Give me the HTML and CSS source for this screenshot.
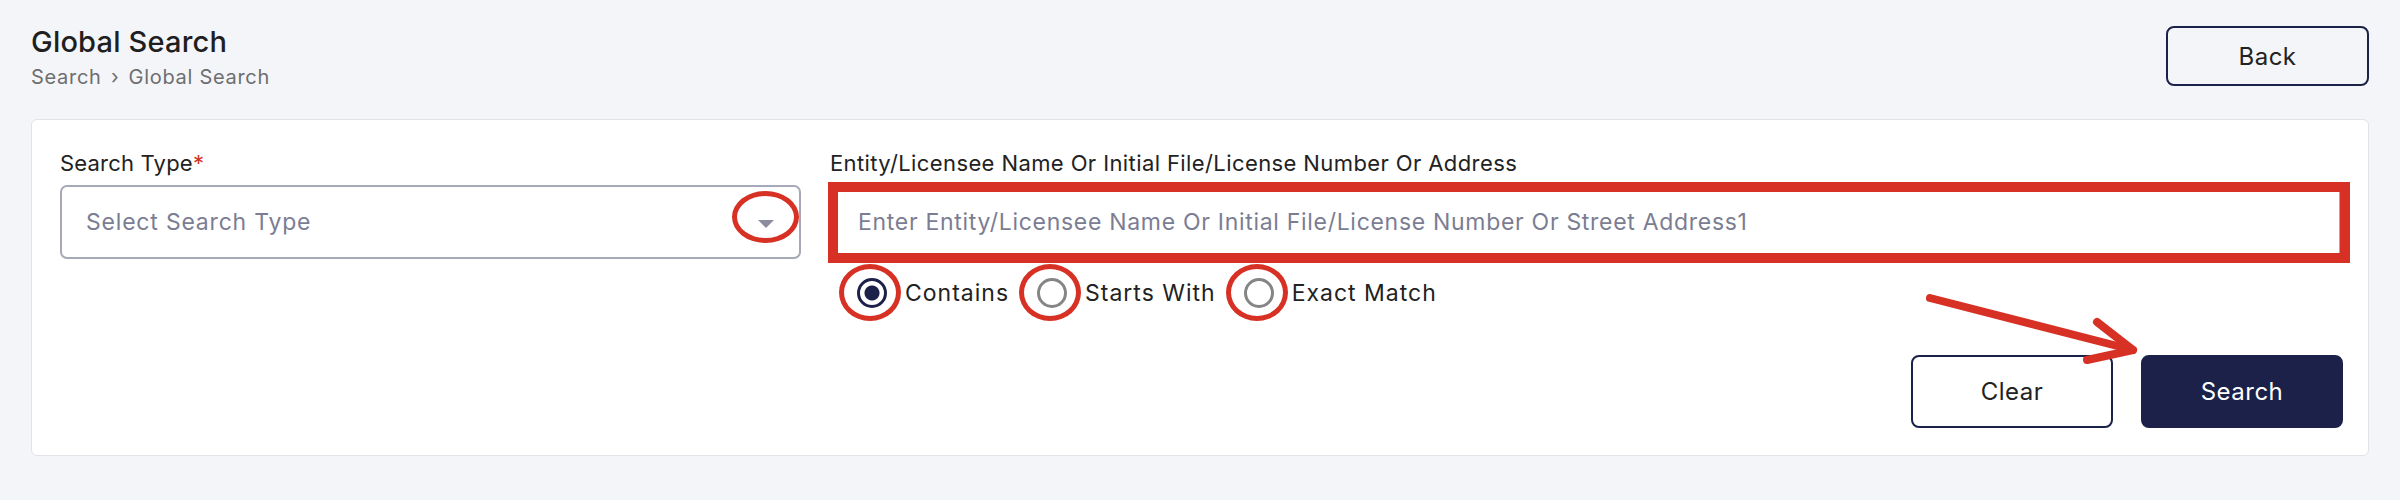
FILE: index.html
```html
<!DOCTYPE html>
<html lang="en-US">
  <head>
    <title>Global Search</title>
    <meta charset="utf-8" />
    <link rel="stylesheet" href="styles.css">
  </head>
  <body>
    <div class="page">
      <header class="top">
        <div class="heading">
          <h1 class="title">Global Search</h1>
          <nav class="crumbs">Search <span class="sep">&#8250;</span> Global Search</nav>
        </div>
        <button class="btn btnOutline back">Back</button>
      </header>

      <section class="card">
        <div class="fields">
          <div class="field">
            <label class="label">Search Type<span class="req">*</span></label>
            <div class="select">
              <span class="selectText">Select Search Type</span>
              <span class="caret"><span class="ring ringCaret"></span></span>
            </div>
          </div>

          <div class="field">
            <label class="label">Entity/Licensee Name Or Initial File/License Number Or Address</label>
            <div class="inputWrap">
              <input class="input" type="text" placeholder="Enter Entity/Licensee Name Or Initial File/License Number Or Street Address1" />
              <span class="box"></span>
            </div>
            <div class="radios">
              <label class="radio">
                <span class="radioMark"><input type="radio" name="match" checked /><span class="ring"></span></span>
                Contains
              </label>
              <label class="radio">
                <span class="radioMark"><input type="radio" name="match" /><span class="ring"></span></span>
                Starts With
              </label>
              <label class="radio">
                <span class="radioMark"><input type="radio" name="match" /><span class="ring"></span></span>
                Exact Match
              </label>
            </div>
          </div>
        </div>

        <div class="actions">
          <button class="btn btnOutline">Clear</button>
          <button class="btn btnPrimary">Search</button>
        </div>

        <!-- pointer to the search button -->
        <svg class="arrow" width="260" height="100" viewBox="0 0 260 100">
          <g fill="none" stroke="#d63124" stroke-width="8" stroke-linecap="round" stroke-linejoin="round">
            <path d="M30 18 L233 70" />
            <path d="M197 42 L233 70 L187 80" />
          </g>
        </svg>
      </section>
    </div>
  </body>
</html>
```

FILE: styles.css
```css
* {
  margin: 0;
  padding: 0;
  box-sizing: border-box;
}

body {
  background-color: #f4f5f9;
  font-family: "Inter", "Noto Sans", sans-serif;
  color: #222222;
}

.page {
  padding: 0 31px;
}

.top {
  display: flex;
  justify-content: space-between;
  align-items: flex-start;
  padding-top: 24px;
  margin-bottom: 30px;
}

.title {
  font-size: 29px;
  line-height: 35px;
  font-weight: 500;
  letter-spacing: 0.2px;
  color: #1f1f1f;
}

.crumbs {
  margin-top: 6px;
  font-size: 20px;
  line-height: 24px;
  letter-spacing: 0.7px;
  color: #6e6e6e;
}

.sep {
  margin: 0 3px;
}

.btn {
  font-family: inherit;
  font-size: 24px;
  letter-spacing: 0.5px;
  border-radius: 8px;
  cursor: pointer;
}

.btnOutline {
  background-color: transparent;
  border: 2px solid #1b2149;
  color: #222222;
}

.btnPrimary {
  background-color: #1b2149;
  border: 2px solid #1b2149;
  color: #ffffff;
}

.back {
  margin-top: 2px;
  width: 203px;
  height: 60px;
}

.card {
  position: relative;
  background-color: #ffffff;
  border: 1px solid #e2e3e8;
  border-radius: 6px;
  padding: 30px 27px 27px 28px;
}

.fields {
  display: grid;
  grid-template-columns: 741px 1fr;
  gap: 29px;
}

.label {
  display: block;
  font-size: 22px;
  line-height: 26px;
  letter-spacing: 0.4px;
  margin-bottom: 9px;
}

.field:first-child .label {
  letter-spacing: 0.2px;
}

.req {
  color: #d63124;
}

.select {
  position: relative;
  height: 74px;
  border: 2px solid #a7a9b9;
  border-radius: 7px;
  display: flex;
  align-items: center;
  padding-left: 24px;
}

.selectText {
  font-size: 23px;
  letter-spacing: 0.8px;
  color: #7b7d92;
}

.caret {
  position: absolute;
  right: 25px;
  top: 33px;
  width: 0;
  height: 0;
  border-left: 8px solid transparent;
  border-right: 8px solid transparent;
  border-top: 8px solid #8b8ca0;
}

.ring {
  position: absolute;
  left: -18px;
  top: -14px;
  width: 62px;
  height: 57px;
  border: 5px solid #d63124;
  border-radius: 50%;
  pointer-events: none;
}

.ringCaret {
  left: -34px;
  top: -37px;
  width: 67px;
  height: 52px;
}

.inputWrap {
  position: relative;
}

.input {
  display: block;
  width: 100%;
  height: 74px;
  border: 2px solid #a7a9b9;
  border-radius: 7px;
  padding-left: 26px;
  font-family: inherit;
  font-size: 23px;
  letter-spacing: 0.7px;
  color: #222222;
  outline: none;
}

.input::placeholder {
  color: #7b7d92;
  opacity: 1;
}

.box {
  position: absolute;
  left: -2px;
  top: -3px;
  right: -9px;
  bottom: -4px;
  border: 10px solid #d63124;
  pointer-events: none;
}

.radios {
  display: flex;
  align-items: center;
  gap: 28px;
  margin-top: 17px;
  padding-left: 27px;
}

.radio {
  display: flex;
  align-items: center;
  gap: 18px;
  font-size: 23px;
  line-height: 34px;
  letter-spacing: 1px;
  color: #222222;
}

.radioMark {
  position: relative;
  width: 30px;
  height: 30px;
}

.radioMark input {
  appearance: none;
  display: block;
  width: 30px;
  height: 30px;
  border: 3px solid #858585;
  border-radius: 50%;
  margin: 0;
}

.radioMark input:checked {
  border-color: #1b2149;
  background: radial-gradient(circle, #1b2149 0 7px, #ffffff 8px);
}

.actions {
  display: flex;
  justify-content: flex-end;
  gap: 28px;
  margin-top: 45px;
  margin-right: -2px;
}

.actions .btn {
  width: 202px;
  height: 73px;
}

.arrow {
  position: absolute;
  left: 1868px;
  top: 160px;
}
```
